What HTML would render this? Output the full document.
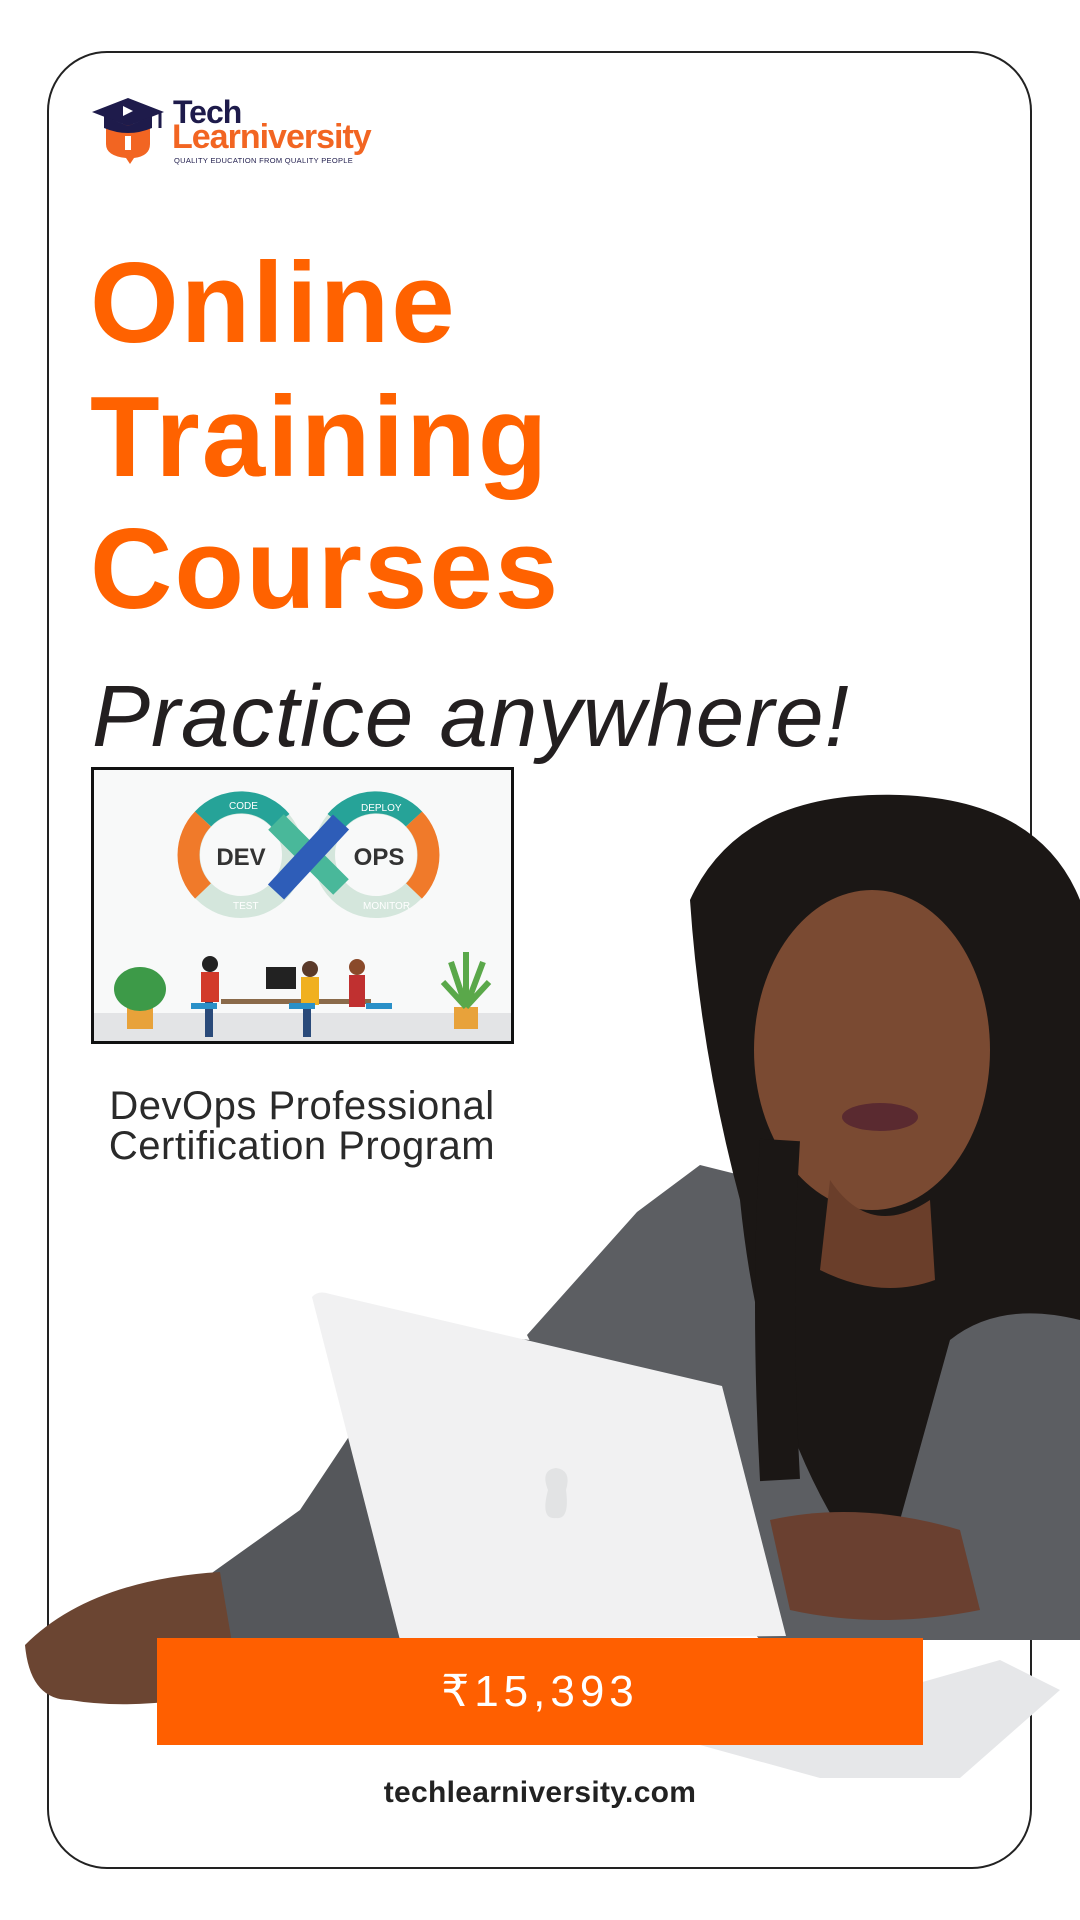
<!DOCTYPE html>
<html><head><meta charset="utf-8">
<style>
*{margin:0;padding:0;box-sizing:border-box}
body{width:1080px;height:1920px;background:#fff;position:relative;overflow:hidden;font-family:"Liberation Sans",sans-serif}
.card{position:absolute;left:47px;top:51px;width:985px;height:1818px;border:2px solid #222;border-radius:60px}
.abs{position:absolute;white-space:nowrap}
.h{left:90px;font-weight:700;color:#ff6200;font-size:114px;line-height:1;letter-spacing:2px}
</style></head><body>
<div class="card"></div>

<!-- logo -->
<svg class="abs" style="left:90px;top:94px" width="80" height="70" viewBox="0 0 80 70">
<path d="M16 36 Q16 30 22 30 L54 30 Q60 30 60 36 L60 50 Q60 62 44 64 L40 70 L36 64 Q16 62 16 50 Z" fill="#f26522"/>
<path d="M2 18 L38 4 L74 18 L38 32 Z" fill="#1e1b4b"/>
<path d="M14 22 L14 34 Q38 44 62 34 L62 22 L38 32 Z" fill="#1e1b4b"/>
<path d="M33 12 L33 22 L43 17 Z" fill="#fff"/>
<path d="M70 19 L70 34" stroke="#1e1b4b" stroke-width="3"/>
<rect x="35" y="42" width="6" height="14" fill="#fff"/>
</svg>
<div class="abs" style="left:173px;top:96px;font-size:32px;font-weight:700;color:#1e1b4b;letter-spacing:-1px;line-height:1">Tech</div>
<div class="abs" style="left:172px;top:120px;font-size:34px;font-weight:700;color:#f26522;letter-spacing:-1px;line-height:1">Learniversity</div>
<div class="abs" style="left:174px;top:156px;font-size:7.5px;color:#1e1b4b;letter-spacing:0.3px">QUALITY EDUCATION FROM QUALITY PEOPLE</div>

<div class="abs h" style="top:247px">Online</div>
<div class="abs h" style="top:381px">Training</div>
<div class="abs h" style="top:513px">Courses</div>
<div class="abs" style="left:92px;top:673px;font-size:87px;font-style:italic;color:#231f20;line-height:1;letter-spacing:1px">Practice anywhere!</div>

<!-- devops image -->
<svg class="abs" style="left:91px;top:767px" width="423" height="277" viewBox="0 0 423 277">
<rect x="0" y="0" width="423" height="277" fill="#f8f9f9"/>
<rect x="0" y="246" width="423" height="31" fill="#e3e4e6"/>
<circle cx="150" cy="88" r="52" fill="none" stroke="#d4e6dc" stroke-width="22"/>
<path d="M112 52 A52 52 0 0 0 112 124" fill="none" stroke="#f07a2a" stroke-width="22"/>
<path d="M112 52 A52 52 0 0 1 190 54" fill="none" stroke="#26a398" stroke-width="22"/>
<circle cx="285" cy="88" r="52" fill="none" stroke="#d4e6dc" stroke-width="22"/>
<path d="M323 52 A52 52 0 0 1 323 124" fill="none" stroke="#f07a2a" stroke-width="22"/>
<path d="M245 54 A52 52 0 0 1 323 52" fill="none" stroke="#26a398" stroke-width="22"/>
<path d="M185 55 L250 120" stroke="#49b89a" stroke-width="22"/>
<path d="M250 55 L185 125" stroke="#2e5db8" stroke-width="22"/>
<text x="150" y="98" font-size="24" font-weight="700" fill="#333" text-anchor="middle" font-family="Liberation Sans">DEV</text>
<text x="288" y="98" font-size="24" font-weight="700" fill="#333" text-anchor="middle" font-family="Liberation Sans">OPS</text>
<text x="138" y="42" font-size="10" fill="#fff" font-family="Liberation Sans">CODE</text>
<text x="270" y="44" font-size="10" fill="#fff" font-family="Liberation Sans">DEPLOY</text>
<text x="142" y="142" font-size="10" fill="#fff" font-family="Liberation Sans">TEST</text>
<text x="272" y="142" font-size="10" fill="#fff" font-family="Liberation Sans">MONITOR</text>
<rect x="36" y="240" width="26" height="22" fill="#e8a23a"/>
<ellipse cx="49" cy="222" rx="26" ry="22" fill="#3d9a48"/>
<rect x="363" y="240" width="24" height="22" fill="#e8a23a"/>
<path d="M375 240 L360 195 M375 240 L375 185 M375 240 L392 195 M375 240 L352 215 M375 240 L398 215" stroke="#5aa84a" stroke-width="6"/>
<rect x="130" y="232" width="150" height="5" fill="#8a6a4a"/>
<rect x="175" y="200" width="30" height="22" fill="#222"/>
<rect x="110" y="205" width="18" height="30" fill="#d23a2a"/><circle cx="119" cy="197" r="8" fill="#222"/>
<rect x="114" y="235" width="8" height="35" fill="#2a4a7a"/>
<rect x="210" y="210" width="18" height="28" fill="#f0b020"/><circle cx="219" cy="202" r="8" fill="#5a3a2a"/>
<rect x="212" y="238" width="8" height="32" fill="#2a4a7a"/>
<rect x="258" y="208" width="16" height="32" fill="#c03030"/><circle cx="266" cy="200" r="8" fill="#8a4a2a"/>
<rect x="100" y="236" width="26" height="6" fill="#2a90c8"/><rect x="198" y="236" width="26" height="6" fill="#2a90c8"/><rect x="275" y="236" width="26" height="6" fill="#2a90c8"/>
<rect x="1.5" y="1.5" width="420" height="274" fill="none" stroke="#111" stroke-width="3"/>
</svg>

<div class="abs" style="left:0;width:604px;top:1086px;text-align:center;font-size:40px;color:#2a2a2a;line-height:40px;letter-spacing:0.5px">DevOps Professional<br>Certification Program</div>

<!-- photo approximation -->
<svg class="abs" style="left:0;top:780px" width="1080" height="1140" viewBox="0 780 1080 1140">
<path d="M527 1335 L637 1212 L700 1165 L760 1180 L1080 1100 L1080 1640 L760 1640 L560 1400 Z" fill="#5c5e62"/>
<path d="M202 1580 L300 1510 L420 1330 L530 1340 L560 1400 L500 1640 L226 1640 Z" fill="#55575b"/>
<path d="M690 900 Q740 790 900 795 Q1040 800 1080 900 L1080 1320 Q1000 1300 950 1340 L900 1520 L840 1530 Q760 1400 740 1200 Q700 1050 690 900 Z" fill="#1b1715"/>
<ellipse cx="872" cy="1050" rx="118" ry="160" fill="#7a4a32"/>
<path d="M830 1180 Q870 1240 930 1200 L935 1280 Q880 1300 820 1270 Z" fill="#6a3e2a"/>
<ellipse cx="880" cy="1117" rx="38" ry="14" fill="#5a2a30"/>
<path d="M780 1140 Q770 1300 780 1480" stroke="#1b1715" stroke-width="40" fill="none"/>
<path d="M770 1520 Q860 1500 960 1530 L980 1610 Q880 1630 790 1610 Z" fill="#6a4030"/>
<path d="M25 1645 Q90 1580 220 1572 L240 1690 Q140 1712 70 1700 Q30 1700 25 1645 Z" fill="#6b4532"/>
<path d="M700 1745 L1000 1660 L1060 1690 L960 1778 L820 1778 Z" fill="#e6e7e9"/>
<path d="M312 1297 Q318 1290 330 1294 L722 1386 L786 1636 L400 1640 Z" fill="#f1f1f2"/>
<path d="M548 1490 Q540 1470 556 1468 Q572 1470 566 1490 Q570 1520 556 1518 Q540 1520 548 1490 Z" fill="#e2e3e4"/>
</svg>

<div class="abs" style="left:157px;top:1638px;width:766px;height:107px;background:#ff5f00"></div>
<div class="abs" style="left:157px;top:1638px;width:766px;height:107px;line-height:107px;text-align:center;color:#fff;font-size:44px;letter-spacing:5px;font-family:'Liberation Sans','DejaVu Sans',sans-serif">₹15,393</div>

<div class="abs" style="left:0;width:1080px;top:1776px;text-align:center;font-size:30px;font-weight:700;color:#222;letter-spacing:0.3px">techlearniversity.com</div>
</body></html>
